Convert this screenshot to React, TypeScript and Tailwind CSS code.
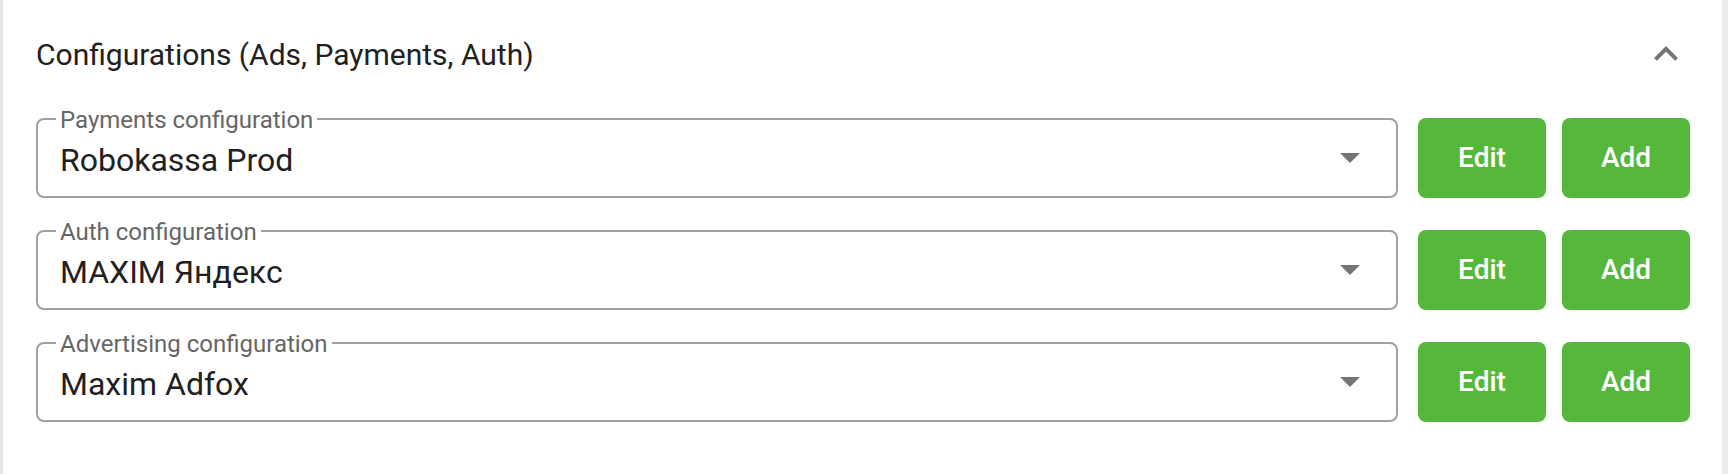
const configs = [
  { label: "Payments configuration", value: "Robokassa Prod" },
  { label: "Auth configuration", value: "MAXIM Яндекс" },
  { label: "Advertising configuration", value: "Maxim Adfox" },
];

function ConfigRow({ label, value }: { label: string; value: string }) {
  return (
    <div className="flex h-[80px] gap-[20px]">
      <div className="relative flex flex-1 items-center rounded-[8px] border-2 border-[#a0a0a0]">
        <span className="absolute left-[18px] top-[-12px] bg-white px-1 text-[24px] leading-[24px] text-[#666666]">
          {label}
        </span>
        <span className="mt-[3px] flex-1 pl-[22px] text-[32px] text-[#212121]">{value}</span>
        <svg width="20" height="10" viewBox="0 0 20 10" className="mr-[36px]">
          <path d="M0 0 10 10 20 0z" fill="#757575" />
        </svg>
      </div>
      <div className="flex gap-[16px]">
        <button className="w-[128px] rounded-[8px] bg-[#56b83a] text-[28px] font-medium text-white">
          Edit
        </button>
        <button className="w-[128px] rounded-[8px] bg-[#56b83a] text-[28px] font-medium text-white">
          Add
        </button>
      </div>
    </div>
  );
}

export default function App() {
  return (
    <div className="flex h-[474px] w-[1728px] bg-white font-[Roboto,sans-serif]">
      <div className="w-[3px] bg-[#e6e6e6]" />
      <div className="flex-1 pl-[33px] pr-[32px]">
        <div className="mt-[30px] flex h-[48px] items-center justify-between">
          <h2 className="text-[30px] font-normal text-[#212121]">
            Configurations (Ads, Payments, Auth)
          </h2>
          <svg width="48" height="48" viewBox="0 0 24 24">
            <path d="M7.41 15.41 12 10.83l4.59 4.58L18 14l-6-6-6 6z" fill="#757575" />
          </svg>
        </div>
        <div className="mt-[40px] flex flex-col gap-[32px]">
          {configs.map((c) => (
            <ConfigRow key={c.label} label={c.label} value={c.value} />
          ))}
        </div>
      </div>
      <div className="w-[6px] bg-[#ebebeb]" />
    </div>
  );
}
